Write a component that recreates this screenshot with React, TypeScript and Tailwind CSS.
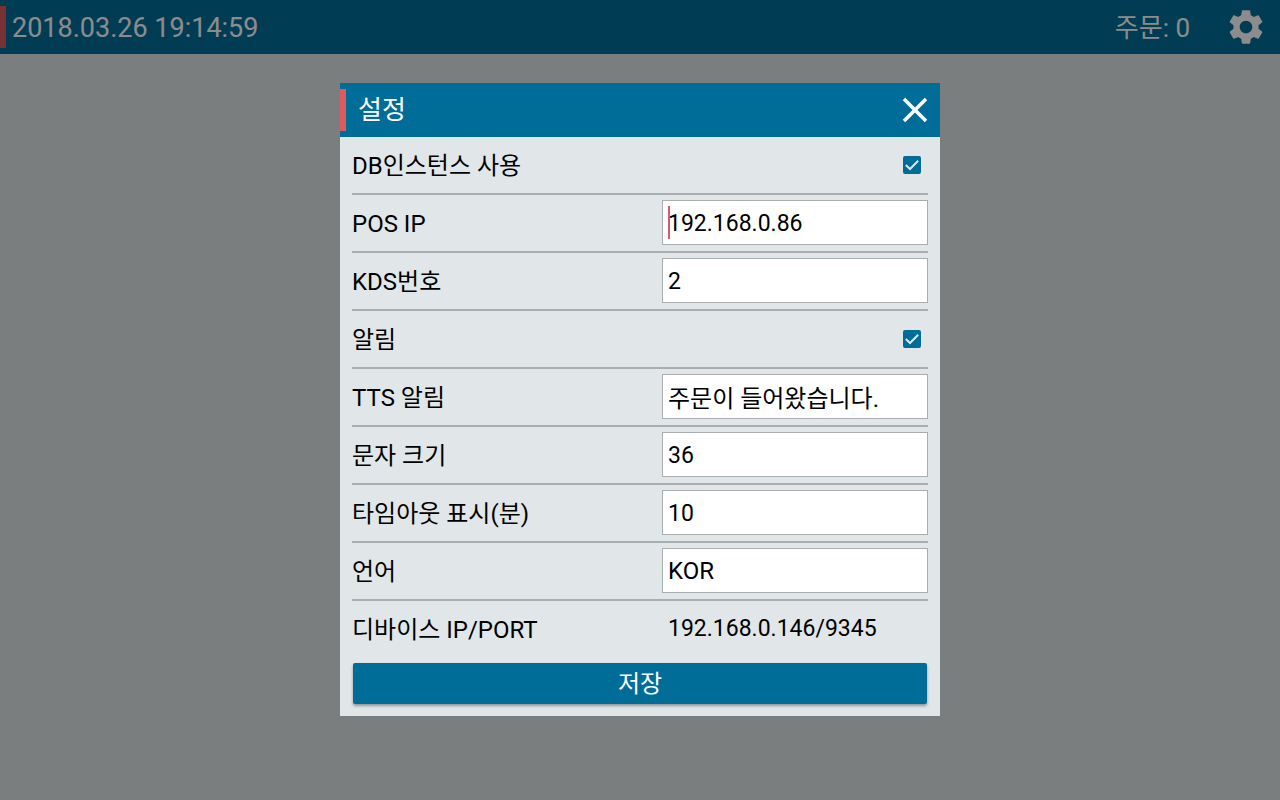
import type { ReactNode } from "react"
import { MdClose, MdSettings } from "react-icons/md"

interface RowProps {
  label: string
  htmlFor?: string
  last?: boolean
  children: ReactNode
}

function Row({ label, htmlFor, last = false, children }: RowProps) {
  return (
    <div className={last ? "flex h-14 items-center" : "flex h-[58px] items-center border-b-2 border-[#a9adaf]"}>
      {htmlFor ? (
        <label htmlFor={htmlFor} className="flex-1 pt-0.5">
          {label}
        </label>
      ) : (
        <span className="flex-1 pt-0.5">{label}</span>
      )}
      {children}
    </div>
  )
}

interface TextRowProps {
  id: string
  label: string
  value: string
  caret?: boolean
}

function TextRow({ id, label, value, caret = false }: TextRowProps) {
  // digits run a little smaller than the Korean text
  const size = /^[\d.]+$/.test(value) ? "pt-0.5 text-[23px]" : "text-2xl"

  return (
    <Row label={label} htmlFor={id}>
      <div className="relative w-[266px]">
        <input
          id={id}
          type="text"
          defaultValue={value}
          className={`block h-[45px] w-full border border-[#a9adaf] bg-white px-[5px] outline-none ${size}`}
        />
        {caret && <span className="absolute top-1.5 left-1.5 h-[33px] w-0.5 bg-[#d9596a]" />}
      </div>
    </Row>
  )
}

function CheckRow({ id, label }: { id: string; label: string }) {
  return (
    <Row label={label} htmlFor={id}>
      <span className="mr-[7px] grid">
        <input
          id={id}
          type="checkbox"
          defaultChecked
          className="peer col-start-1 row-start-1 size-[18px] appearance-none rounded-xs border-2 border-[#006d99] checked:bg-[#006d99]"
        />
        <svg
          viewBox="0 0 18 18"
          className="pointer-events-none invisible col-start-1 row-start-1 size-[18px] peer-checked:visible"
          fill="none"
          stroke="#e1e6e8"
          strokeWidth="2"
        >
          <path d="M2.8 9 L7 13 L15.2 4.8" />
        </svg>
      </span>
    </Row>
  )
}

export default function App() {
  return (
    <div className="min-h-screen bg-[#e1e6e8] font-[Roboto,'Noto_Sans_CJK_KR',sans-serif]">
      <header className="flex h-[54px] items-center bg-[#006d99] pr-[13px] text-white">
        <span className="mr-1.5 h-[42px] w-1.5 bg-[#dd5b5f]" />
        <time className="flex-1 pt-0.5 text-[27px]">2018.03.26 19:14:59</time>
        <span className="pt-0.5 text-[26px]">주문: 0</span>
        <button type="button" aria-label="설정" className="ml-[35px]">
          <MdSettings size={42} />
        </button>
      </header>

      <div className="fixed inset-0 flex items-center justify-center bg-black/45 pb-0.5">
        <section role="dialog" aria-labelledby="dialog-title" className="w-full max-w-[600px] bg-[#e1e6e8] text-2xl text-black">
          <div className="flex h-[54px] items-center bg-[#006d99] pr-1 text-white">
            <span className="mr-3 h-[42px] w-1.5 bg-[#dd5b5f]" />
            <h2 id="dialog-title" className="flex-1 pt-0.5 text-[26px]">
              설정
            </h2>
            <button type="button" aria-label="닫기">
              <MdClose size={42} />
            </button>
          </div>

          <form className="px-3 pb-3">
            <CheckRow id="db" label="DB인스턴스 사용" />
            <TextRow id="pos-ip" label="POS IP" value="192.168.0.86" caret />
            <TextRow id="kds" label="KDS번호" value="2" />
            <CheckRow id="alarm" label="알림" />
            <TextRow id="tts" label="TTS 알림" value="주문이 들어왔습니다." />
            <TextRow id="font-size" label="문자 크기" value="36" />
            <TextRow id="timeout" label="타임아웃 표시(분)" value="10" />
            <TextRow id="lang" label="언어" value="KOR" />
            <Row label="디바이스 IP/PORT" last>
              <span className="w-[266px] px-1.5 pt-0.5 text-[23px]">192.168.0.146/9345</span>
            </Row>
            <div className="px-px pt-1.5">
              <button
                type="button"
                className="block h-[41px] w-full rounded-xs bg-[#006d99] pt-0.5 text-white shadow-[0_2px_3px_rgba(0,0,0,0.35)]"
              >
                저장
              </button>
            </div>
          </form>
        </section>
      </div>
    </div>
  )
}
